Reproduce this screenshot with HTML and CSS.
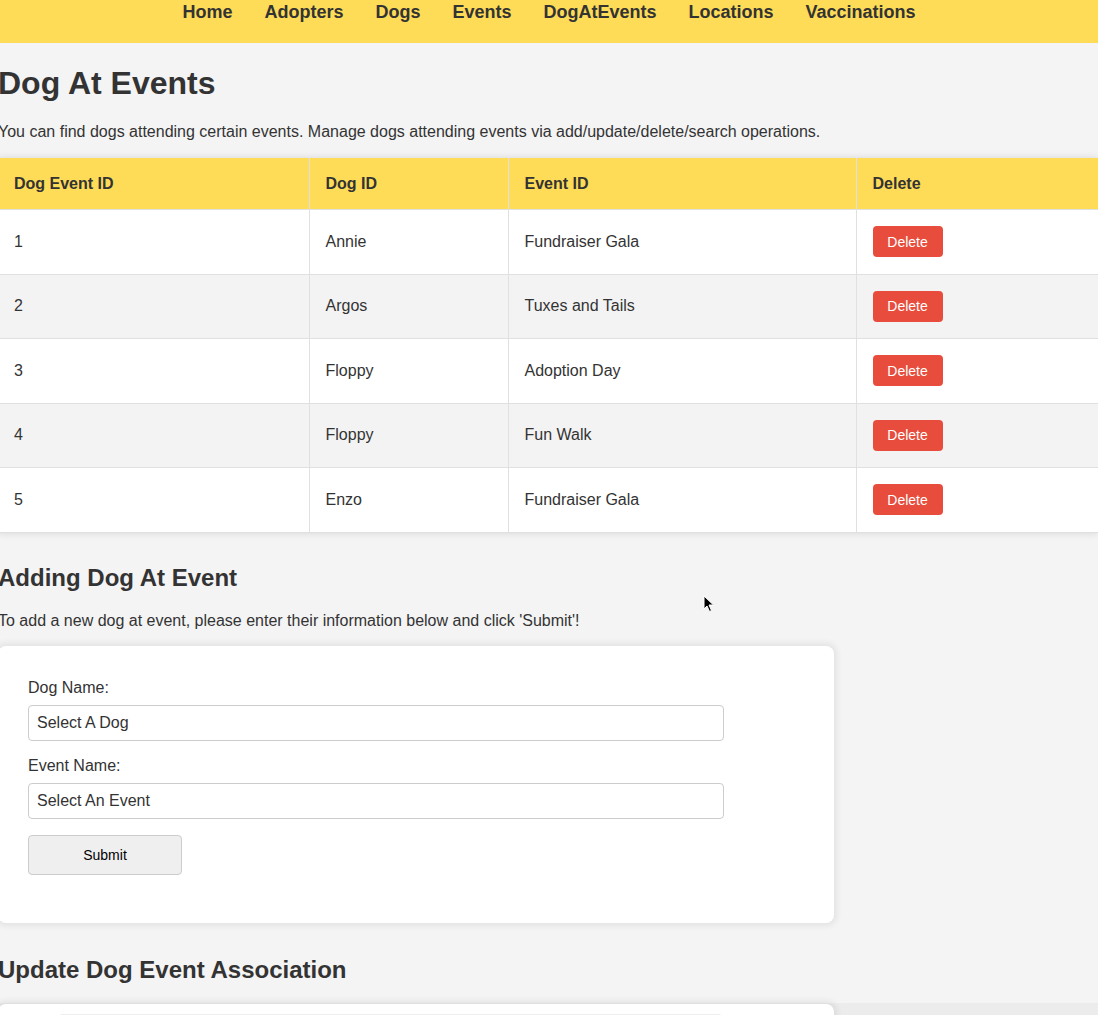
FILE: index.html
```html
<!DOCTYPE html>
<html lang="en">
<head>
<meta charset="utf-8">
<title>Dog At Events</title>
<link rel="stylesheet" href="styles.css">
</head>
<body>
<nav class="topnav">
  <a href="#">Home</a>
  <a href="#">Adopters</a>
  <a href="#">Dogs</a>
  <a href="#">Events</a>
  <a href="#">DogAtEvents</a>
  <a href="#">Locations</a>
  <a href="#">Vaccinations</a>
</nav>
<main class="page">
  <h1>Dog At Events</h1>
  <p>You can find dogs attending certain events. Manage dogs attending events via add/update/delete/search operations.</p>
  <div class="table-wrap">
    <table class="data">
      <colgroup>
        <col class="c1"><col class="c2"><col class="c3"><col class="c4">
      </colgroup>
      <thead>
        <tr><th>Dog Event ID</th><th>Dog ID</th><th>Event ID</th><th>Delete</th></tr>
      </thead>
      <tbody>
        <tr><td>1</td><td>Annie</td><td>Fundraiser Gala</td><td><button class="del">Delete</button></td></tr>
        <tr><td>2</td><td>Argos</td><td>Tuxes and Tails</td><td><button class="del">Delete</button></td></tr>
        <tr><td>3</td><td>Floppy</td><td>Adoption Day</td><td><button class="del">Delete</button></td></tr>
        <tr><td>4</td><td>Floppy</td><td>Fun Walk</td><td><button class="del">Delete</button></td></tr>
        <tr><td>5</td><td>Enzo</td><td>Fundraiser Gala</td><td><button class="del">Delete</button></td></tr>
      </tbody>
    </table>
  </div>

  <h2 class="sec-title">Adding Dog At Event</h2>
  <p>To add a new dog at event, please enter their information below and click 'Submit'!</p>
  <form class="card">
    <label class="lbl">Dog Name:</label>
    <div class="field">Select A Dog</div>
    <label class="lbl">Event Name:</label>
    <div class="field">Select An Event</div>
    <button type="button" class="submit">Submit</button>
  </form>

  <h2 class="sec-title">Update Dog Event Association</h2>
  <form class="card card-next">
    <div class="field field-next"></div>
  </form>
</main>
<svg class="cursor" width="12" height="18" viewBox="0 0 12 18"><path d="M1 1 L1 14 L4 11 L6.5 16.5 L8.5 15.5 L6 10 L10.5 10 Z" fill="#000" stroke="#fff" stroke-width="1"/></svg>
</body>
</html>
```
FILE: styles.css
```css
html, body {
  margin: 0;
  padding: 0;
}
body {
  background: linear-gradient(#f4f4f4 1003px, #ececec 1003px);
  font-family: "Liberation Sans", Arial, sans-serif;
  color: #333;
  overflow: hidden;
  height: 1015px;
  position: relative;
}
.topnav {
  background: #ffdc57;
  height: 43px;
  display: flex;
  justify-content: center;
  gap: 32px;
  box-sizing: border-box;
  padding-top: 2px;
}
.topnav a {
  color: #333;
  text-decoration: none;
  font-weight: bold;
  font-size: 18px;
  line-height: 21px;
}
.page {
  margin-left: -2px;
}
h1 {
  font-size: 32px;
  margin: 22px 0 21px;
  line-height: 37px;
}
h2 {
  font-size: 24px;
  margin: 20px 0;
  line-height: 28px;
}
p {
  font-size: 16px;
  margin: 16px 0;
  line-height: 18px;
}
.table-wrap {
  width: 1100px;
  margin: 17px 0 31px;
  box-shadow: 0 0 8px rgba(0, 0, 0, 0.12);
}
.data {
  width: 100%;
  border-collapse: collapse;
  table-layout: fixed;
  font-size: 16px;
}
.c1 { width: 311px; }
.c2 { width: 199px; }
.c3 { width: 348px; }
.data th, .data td {
  text-align: left;
  border-bottom: 1px solid #e0e0e0;
  border-left: 1px solid #e0e0e0;
}
.data th:first-child, .data td:first-child {
  border-left: none;
}
.data th {
  background: #ffdc57;
  font-weight: bold;
  padding: 16px;
  line-height: 19px;
}
.data tbody tr:nth-child(odd) { background: #fff; }
.data tbody tr:nth-child(even) { background: #f3f3f3; }
.data td {
  height: 31px;
  line-height: 18px;
  padding: 16px 16px 16.5px 16px;
}
.del {
  background: #e74c3c;
  color: #fff;
  border: none;
  border-radius: 4px;
  font-family: "Liberation Sans", Arial, sans-serif;
  font-size: 14px;
  width: 70px;
  height: 31px;
  padding: 0;
  display: block;
}
.card {
  background: #fff;
  width: 836px;
  box-sizing: border-box;
  padding: 33px 30px 30px;
  border-radius: 8px;
  box-shadow: 0 0 6px 3px rgba(0, 0, 0, 0.07);
  margin: 15px 0 33px;
}
.lbl {
  display: block;
  font-size: 16px;
  line-height: 18px;
  margin-bottom: 8px;
}
.field {
  width: 696px;
  height: 36px;
  box-sizing: border-box;
  border: 1px solid #ccc;
  border-radius: 4px;
  padding: 0 8px;
  font-size: 16px;
  line-height: 34px;
  margin-bottom: 16px;
  background: #fff;
}
.submit {
  display: block;
  width: 154px;
  height: 40px;
  background: #efefef;
  border: 1px solid #ccc;
  border-radius: 4px;
  font-family: "Liberation Sans", Arial, sans-serif;
  font-size: 14px;
  color: #000;
  margin-bottom: 18px;
}
.card-next {
  margin-top: 18px;
  height: 200px;
  padding-top: 10px;
}
.field-next {
  margin-left: 30px;
  width: 665px;
  border-color: #eee;
}
.cursor {
  position: absolute;
  left: 703px;
  top: 595px;
}
```
